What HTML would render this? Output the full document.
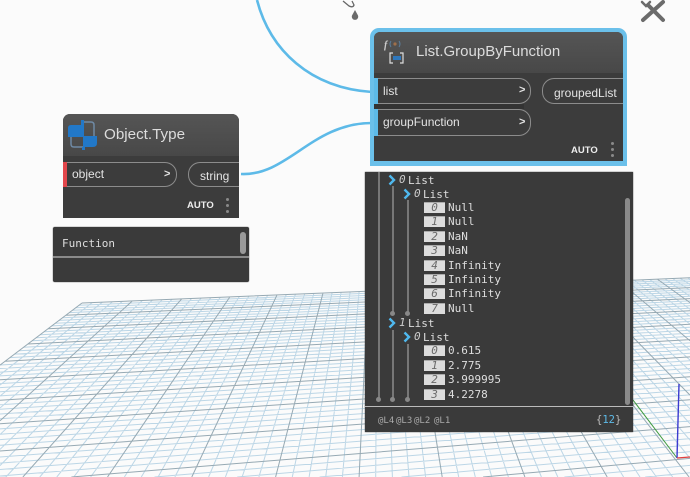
<!DOCTYPE html>
<html><head><meta charset="utf-8"><style>
html,body{margin:0;padding:0;width:690px;height:477px;overflow:hidden}
#root{position:absolute;left:0;top:0;width:690px;height:477px;overflow:hidden;background:#fbfbfb;font-family:"Liberation Sans",sans-serif}
svg.bg{position:absolute;left:0;top:0;overflow:hidden}
.a{position:absolute;white-space:nowrap}
.node{position:absolute;background:#3c3c3c;overflow:hidden}
.hdr{position:absolute;left:0;top:0;right:0;background:linear-gradient(#555,#484848)}
.pill{position:absolute;border:1px solid #8c8c8c;box-sizing:border-box;background:#3c3c3c}
.t{position:absolute;white-space:nowrap;color:#e4e4e4;font-size:12px;line-height:14px}
.dot{position:absolute;width:3px;height:3px;border-radius:50%;background:#8a8a8a}
.panel{position:absolute;background:#3a3a3a;box-shadow:0 0 1px #222;font-family:"DejaVu Sans Mono",monospace;font-size:11px;color:#dedede}
.r{position:absolute;white-space:nowrap;line-height:13px}
.b{position:absolute;left:59px;width:21px;height:10px;background:#dcdcdc;border-top:1px solid #aaa;color:#6a6a6a;font-style:italic;font-size:11px;line-height:10px;text-align:center}
.v{position:absolute;width:2px;background:#777}
.d{position:absolute;width:5px;height:5px;border-radius:50%;background:#888}
.i{position:absolute;white-space:nowrap;font-style:italic;font-size:11px;line-height:13px;color:#ccc}
</style></head><body><div id="root">
<svg id="grid" class="bg" width="690" height="477" viewBox="0 0 690 477"></svg>
<svg class="bg" width="690" height="477" viewBox="0 0 690 477">
<line x1="633" y1="400" x2="677" y2="458" stroke="#3f9a3f" stroke-width="1"/>
<line x1="677" y1="458" x2="679" y2="384" stroke="#3b3bd0" stroke-width="1.4"/>
<line x1="677" y1="458" x2="690" y2="457" stroke="#e04040" stroke-width="1.2"/>
<path d="M257 0C270 50 310 88 372 92" fill="none" stroke="#5dbae8" stroke-width="2.6"/>
<path d="M241 174C288 176 312 123 372 123" fill="none" stroke="#5dbae8" stroke-width="2.6"/>
<path d="M343 1L349 6Q353 8 354 5L352 1" fill="none" stroke="#666" stroke-width="1.3"/>
<path d="M355 10L358 15.5A3.2 3.2 0 1 1 352 15.5Z" fill="#6a6a6a"/>
<g stroke="#6b6b6b" fill="none" stroke-linecap="round">
<path d="M663 2L643 20" stroke-width="4"/>
<path d="M648 5L663 20" stroke-width="4"/>
<path d="M642 2L646 6L650 2" stroke-width="2.5"/>
</g>
</svg>

<!-- List.GroupByFunction -->
<div class="a" style="left:370px;top:28px;width:257px;height:138px;background:#6bc0ea;border-radius:9px 9px 0 0"></div>
<div class="node" style="left:374px;top:32px;width:249px;height:129px;border-radius:6px 6px 0 0">
 <div class="hdr" style="height:41px"></div>
 <div class="a" style="left:0;top:72px;width:150px;height:5px;background:#333"></div>
 <div class="a" style="left:0;top:46px;width:4px;height:26px;background:#5dbae8"></div>
 <div class="a" style="left:0;top:77px;width:4px;height:27px;background:#5dbae8"></div>
 <div class="pill" style="left:4px;top:46px;width:153px;height:26px;border-left:0;border-radius:0 12px 12px 0"></div>
 <div class="pill" style="left:4px;top:77px;width:153px;height:27px;border-left:0;border-radius:0 12px 12px 0"></div>
 <div class="pill" style="left:168px;top:46px;width:81px;height:26px;border-right:0;border-radius:12px 0 0 12px"></div>
 <div class="t" style="left:9px;top:52px">list</div>
 <div class="t" style="left:145px;top:51px;font-size:11px;font-weight:bold">&gt;</div>
 <div class="t" style="left:9px;top:83px">groupFunction</div>
 <div class="t" style="left:145px;top:83px;font-size:11px;font-weight:bold">&gt;</div>
 <div class="t" style="left:180px;top:54px">groupedList</div>
 <div class="t" style="left:197px;top:112px;font-size:9.5px;font-weight:bold;color:#eee">AUTO</div>
 <div class="dot" style="left:237px;top:110px"></div><div class="dot" style="left:237px;top:116px"></div><div class="dot" style="left:237px;top:122px"></div>
 <div class="t" style="left:42px;top:11px;font-size:15px;line-height:18px;color:#dcdcdc">List.GroupByFunction</div>
 <svg class="a" style="left:6px;top:6px" width="30" height="30" viewBox="0 0 30 30">
  <text x="4" y="10" font-family="Liberation Serif,serif" font-style="italic" font-weight="bold" font-size="10" fill="#ccc">f</text>
  <path d="M11 3Q9 6 11 9M19 3Q21 6 19 9" stroke="#5a7f9f" fill="none"/><circle cx="15" cy="6" r="1.6" fill="#a0704a"/>
  <path d="M13 15H10V25H13M20 15H23V25H20" stroke="#ddd" fill="none" stroke-width="1.2"/>
  <rect x="13" y="18" width="8" height="4" fill="#2f78bd"/>
 </svg>
</div>

<!-- Object.Type -->
<div class="node" style="left:63px;top:114px;width:176px;height:104px;border-radius:7px 7px 0 0">
 <div class="hdr" style="height:42px"></div>
 <div class="a" style="left:0;top:48px;width:4px;height:25px;background:#e2474c"></div>
 <div class="pill" style="left:4px;top:48px;width:110px;height:25px;border-left:0;border-radius:0 12px 12px 0"></div>
 <div class="pill" style="left:125px;top:48px;width:51px;height:25px;border-right:0;border-radius:12px 0 0 12px"></div>
 <div class="t" style="left:9px;top:53px">object</div>
 <div class="t" style="left:101px;top:53px;font-size:11px;font-weight:bold">&gt;</div>
 <div class="t" style="left:137px;top:55px">string</div>
 <div class="t" style="left:124px;top:85px;font-size:9.5px;font-weight:bold;color:#eee">AUTO</div>
 <div class="dot" style="left:163px;top:84px"></div><div class="dot" style="left:163px;top:90px"></div><div class="dot" style="left:163px;top:96px"></div>
 <div class="t" style="left:41px;top:12px;font-size:15.2px;line-height:18px;color:#dcdcdc">Object.Type</div>
 <svg class="a" style="left:5px;top:6px" width="30" height="30" viewBox="0 0 30 30">
  <path d="M15 2H23Q26 2 26 5V16M3 16V24Q3 27 6 27H15" fill="none" stroke="#6f8aa5" stroke-width="1.5"/>
  <path d="M13 0H16V17H0V8Q0 5 3 5H13Z" fill="#2278c8"/>
  <path d="M15 16H29V23Q29 27 25 27H17V30H14V27H15Z" fill="#2278c8"/>
 </svg>
</div>

<!-- Function panel -->
<div class="panel" style="left:53px;top:227px;width:196px;height:55px;border-radius:2px">
 <div class="r" style="left:9px;top:10px">Function</div>
 <div class="a" style="left:187px;top:5px;width:6px;height:22px;background:#9a9a9a;border-radius:3px"></div>
 <div class="a" style="left:0;top:29px;width:196px;height:2px;background:#8a8a8a"></div>
</div>

<!-- Watch panel -->
<div class="panel" style="left:365px;top:172px;width:268px;height:260px;overflow:hidden">
 <div class="v" style="left:13px;top:0;height:226px"></div><div class="d" style="left:11px;top:225px"></div>
 <div class="v" style="left:27px;top:14px;height:127px"></div><div class="d" style="left:25px;top:139px"></div>
 <div class="v" style="left:42px;top:28px;height:113px"></div><div class="d" style="left:40px;top:139px"></div>
 <div class="v" style="left:27px;top:158px;height:68px"></div><div class="d" style="left:25px;top:225px"></div>
 <div class="v" style="left:42px;top:172px;height:54px"></div><div class="d" style="left:40px;top:225px"></div>

 <svg class="a" style="left:0;top:0" width="60" height="172" viewBox="0 0 60 172">
  <g fill="none" stroke="#4fb8ee" stroke-width="2.4">
   <path d="M24.5 3.5L29 8L24.5 12.5"/><path d="M39.5 17.5L44 22L39.5 26.5"/>
   <path d="M24.5 146.5L29 151L24.5 155.5"/><path d="M39.5 160.5L44 165L39.5 169.5"/>
  </g>
 </svg>
 <div class="i" style="left:34px;top:1px">0</div><div class="r" style="left:43px;top:2px">List</div>
 <div class="i" style="left:49px;top:15px">0</div><div class="r" style="left:58px;top:16px">List</div>
 <div class="b" style="top:30px">0</div><div class="r" style="left:83px;top:29px">Null</div>
 <div class="b" style="top:44px">1</div><div class="r" style="left:83px;top:43px">Null</div>
 <div class="b" style="top:59px">2</div><div class="r" style="left:83px;top:58px">NaN</div>
 <div class="b" style="top:73px">3</div><div class="r" style="left:83px;top:72px">NaN</div>
 <div class="b" style="top:88px">4</div><div class="r" style="left:83px;top:87px">Infinity</div>
 <div class="b" style="top:102px">5</div><div class="r" style="left:83px;top:101px">Infinity</div>
 <div class="b" style="top:116px">6</div><div class="r" style="left:83px;top:115px">Infinity</div>
 <div class="b" style="top:131px">7</div><div class="r" style="left:83px;top:130px">Null</div>
 <div class="i" style="left:34px;top:144px">1</div><div class="r" style="left:43px;top:145px">List</div>
 <div class="i" style="left:49px;top:158px">0</div><div class="r" style="left:58px;top:159px">List</div>
 <div class="b" style="top:173px">0</div><div class="r" style="left:83px;top:172px">0.615</div>
 <div class="b" style="top:188px">1</div><div class="r" style="left:83px;top:187px">2.775</div>
 <div class="b" style="top:202px">2</div><div class="r" style="left:83px;top:201px">3.999995</div>
 <div class="b" style="top:217px">3</div><div class="r" style="left:83px;top:216px">4.2278</div>

 <div class="a" style="left:260px;top:26px;width:5px;height:207px;background:#8a8a8a;border-radius:3px"></div>
 <div class="a" style="left:0;top:234px;width:268px;height:1px;background:#bbb"></div>
 <div class="r" style="left:13px;top:243px;font-size:9px;color:#aaa">@L4</div>
 <div class="r" style="left:31px;top:243px;font-size:9px;color:#aaa">@L3</div>
 <div class="r" style="left:49px;top:243px;font-size:9px;color:#aaa">@L2</div>
 <div class="r" style="left:69px;top:243px;font-size:9px;color:#aaa">@L1</div>
 <div class="r" style="left:231px;top:242px;font-size:10.5px;color:#bbb">{<span style="color:#5dbae8">12</span>}</div>
</div>
</div>
<script>
(function(){
var p=[[82,303],[323,293],[280,460],[-174,497]],U=5,V=9;
var x0=p[0][0],y0=p[0][1],x1=p[1][0],y1=p[1][1],x2=p[2][0],y2=p[2][1],x3=p[3][0],y3=p[3][1];
var dx1=x1-x2,dx2=x3-x2,sx=x0-x1+x2-x3,dy1=y1-y2,dy2=y3-y2,sy=y0-y1+y2-y3;
var den=dx1*dy2-dx2*dy1,g=(sx*dy2-dx2*sy)/den,h=(dx1*sy-sx*dy1)/den;
var a=x1-x0+g*x1,b=x3-x0+h*x3,c=x0,d=y1-y0+g*y1,e=y3-y0+h*y3,f=y0;
function P(u,v){u/=U;v/=V;var w=g*u+h*v+1;return [(a*u+b*v+c)/w,(d*u+e*v+f)/w];}
function L(A,B){
 var t0=0,t1=1,dx=B[0]-A[0],dy=B[1]-A[1];
 var c=[[-dx,A[0]],[dx,690-A[0]],[-dy,A[1]],[dy,477-A[1]]];
 for(var k=0;k<4;k++){var q=c[k][0],r=c[k][1];
  if(q==0){if(r<0)return '';continue;}
  var t=r/q;
  if(q<0){if(t>t1)return '';if(t>t0)t0=t;}else{if(t<t0)return '';if(t<t1)t1=t;}
 }
 return 'M'+(A[0]+t0*dx).toFixed(1)+' '+(A[1]+t0*dy).toFixed(1)+'L'+(A[0]+t1*dx).toFixed(1)+' '+(A[1]+t1*dy).toFixed(1);
}
var maxU=14,maxV=12,minor='',major='';
for(var i=0;i<=maxU*5;i++){var l=L(P(i/5,0),P(i/5,maxV));if(i%5==0)major+=l;else minor+=l;}
for(var j=0;j<=maxV*5;j++){var m=L(P(0,j/5),P(maxU,j/5));if(j%5==0)major+=m;else minor+=m;}
document.getElementById('grid').innerHTML='<path d="'+minor+'" fill="none" stroke="#bcd6e6" stroke-width="1"/><path d="'+major+'" fill="none" stroke="#96a9b3" stroke-width="1"/>';
})();
</script>
</body></html>
